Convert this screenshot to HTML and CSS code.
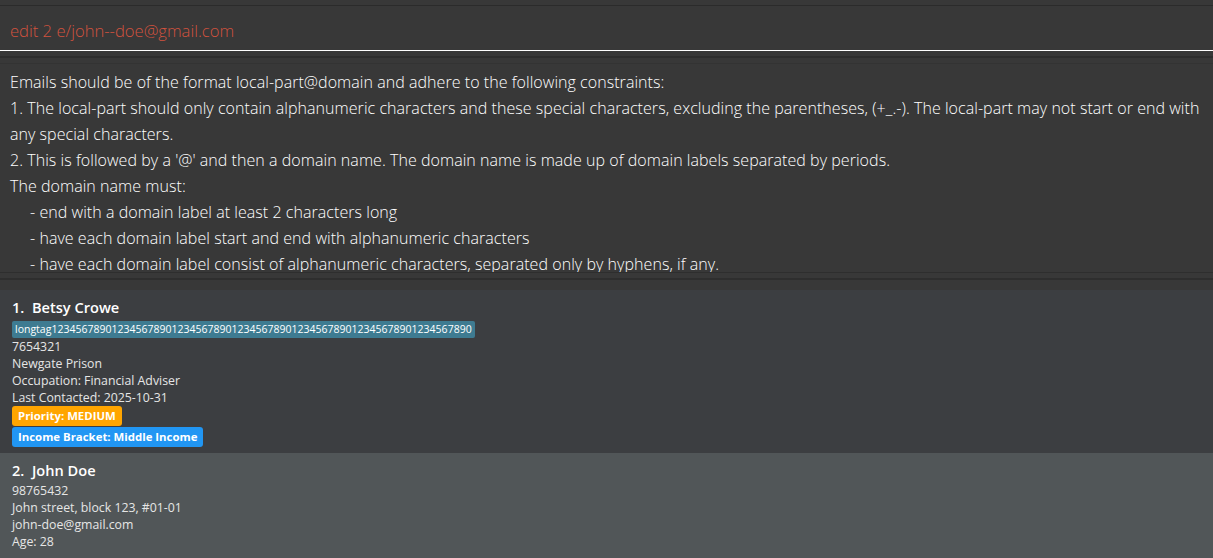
FILE: index.html
```html
<!DOCTYPE html>
<html>
<head>
<meta charset="utf-8">
<link rel="stylesheet" href="styles.css">
</head>
<body>
<div class="app">
  <div class="cmd">
    <div class="cmd-box">edit 2 e/john--doe@gmail.com</div>
  </div>
  <div class="result">
    <div class="result-text">
      <div>Emails should be of the format local-part@domain and adhere to the following constraints:</div>
      <div>1. The local-part should only contain alphanumeric characters and these special characters, excluding the parentheses, (+_.-). The local-part may not start or end with any special characters.</div>
      <div>2. This is followed by a '@' and then a domain name. The domain name is made up of domain labels separated by periods.</div>
      <div>The domain name must:</div>
      <div class="ind">- end with a domain label at least 2 characters long</div>
      <div class="ind">- have each domain label start and end with alphanumeric characters</div>
      <div class="ind">- have each domain label consist of alphanumeric characters, separated only by hyphens, if any.</div>
    </div>
  </div>
  <div class="list">
    <div class="card card-odd">
      <div class="name">1.&nbsp; Betsy Crowe</div>
      <div class="tags"><span class="tag">longtag1234567890123456789012345678901234567890123456789012345678901234567890</span></div>
      <div class="field">7654321</div>
      <div class="field">Newgate Prison</div>
      <div class="field">Occupation: Financial Adviser</div>
      <div class="field">Last Contacted: 2025-10-31</div>
      <div class="badges">
        <span class="badge badge-priority">Priority: MEDIUM</span>
        <span class="badge badge-income">Income Bracket: Middle Income</span>
      </div>
    </div>
    <div class="card card-even">
      <div class="name">2.&nbsp; John Doe</div>
      <div class="fields">
        <div class="field">98765432</div>
        <div class="field">John street, block 123, #01-01</div>
        <div class="field">john-doe@gmail.com</div>
        <div class="field">Age: 28</div>
      </div>
    </div>
  </div>
</div>
</body>
</html>
```
FILE: styles.css
```css
html, body {
  margin: 0;
  padding: 0;
  background: #383838;
  height: 100%;
  overflow: hidden;
}
.app {
  width: 1213px;
  height: 558px;
  display: flex;
  flex-direction: column;
  font-family: "Open Sans", "Noto Sans", sans-serif;
}
.cmd {
  padding-top: 5px;
}
.cmd-box {
  border-top: 1px solid #2b2b2b;
  border-bottom: 1px solid #ffffff;
  height: 46px;
  box-sizing: border-box;
  padding: 4px 10px 0;
  display: flex;
  align-items: center;
  color: #d2523e;
  font-size: 16.6px;
  font-weight: 300;
}
.result {
  margin-top: 5px;
  border-top: 2px solid #2e2e2e;
  border-bottom: 2px solid #2e2e2e;
  padding: 5px 0;
}
.result-text {
  box-sizing: border-box;
  height: 210px;
  border-top: 1px solid #333333;
  border-bottom: 1px solid #2e2e2e;
  padding: 5px 10px 0;
  overflow: hidden;
  color: #ffffff;
  font-size: 16px;
  font-weight: 300;
  line-height: 26px;
  letter-spacing: 0.05px;
}
.ind {
  padding-left: 20px;
}
.list {
  margin-top: 10px;
  flex: 1;
  overflow: hidden;
  display: flex;
  flex-direction: column;
}
.card {
  padding: 6px 12px 6px;
  color: #ffffff;
}
.card-odd {
  background: #3c3e41;
}
.card-even {
  background: #515658;
  flex: 1;
}
.name {
  font-size: 14.6px;
  font-weight: 600;
  line-height: 22px;
}
.fields {
  margin-top: 1px;
}
.field {
  font-size: 12.3px;
  line-height: 17px;
  color: #e6e6e6;
}
.tags {
  display: flex;
  margin: 3px 0 0;
}
.tag {
  background: #3e7b91;
  color: #ffffff;
  font-size: 10.5px;
  line-height: 17px;
  padding: 0 3px;
  border-radius: 2px;
}
.badges {
  display: flex;
  flex-direction: column;
  align-items: flex-start;
  gap: 1px;
}
.badge {
  font-size: 11.4px;
  font-weight: 700;
  line-height: 20px;
  padding: 0 6px;
  border-radius: 3px;
  color: #ffffff;
}
.badge-priority {
  background: #ffa500;
}
.badge-income {
  background: #2196f3;
}
```
